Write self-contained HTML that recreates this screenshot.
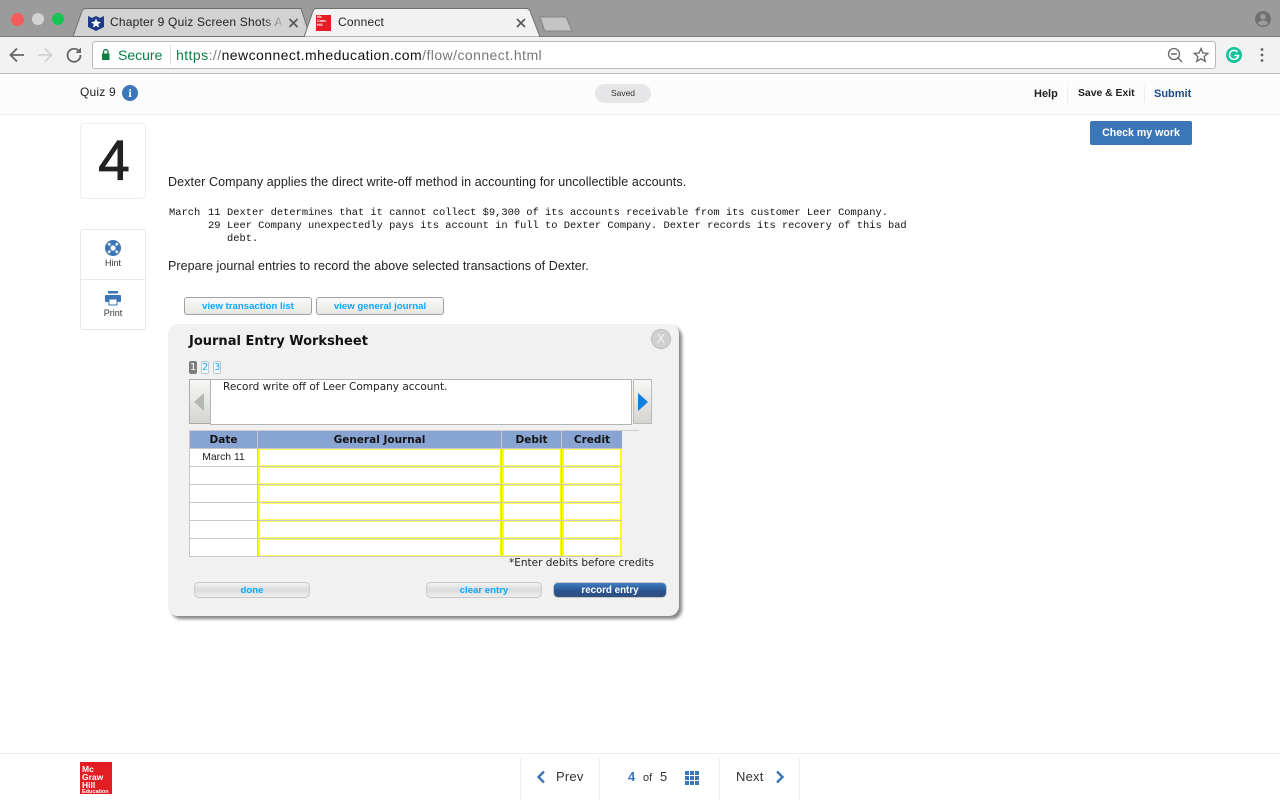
<!DOCTYPE html>
<html lang="en"><head><meta charset="utf-8"><title>Connect</title>
<style>
html,body{margin:0;padding:0;width:1280px;height:800px;overflow:hidden;background:#fff;font-family:"Liberation Sans",sans-serif;color:#222}
.a{position:absolute;white-space:nowrap}
.box{position:absolute;box-sizing:border-box}
.c{position:absolute;box-sizing:border-box;background:#fff;border:1px solid #ffff60;border-left:2px solid #ffff00;border-right:1px solid #ffff00;height:17px}
.d{position:absolute;box-sizing:border-box;background:#fff;left:190px;width:67px;height:17px}
.h{position:absolute;top:431px;height:17px;background:#88a4d2;font:bold 10.500px/18px "DejaVu Sans",sans-serif;color:#111;text-align:center}
.btn{position:absolute;box-sizing:border-box;border:1px solid #a0a0a0;border-radius:3px;background:linear-gradient(#fafafa,#e6e6e2);font:bold 9.600px/17px "Liberation Sans",sans-serif;color:#0ea8ff;text-align:center}
.btn2{position:absolute;box-sizing:border-box;border:1px solid #c8c8c8;border-radius:5px;background:linear-gradient(#f4f4f4,#dadada 50%,#f0f0f0);font:bold 9.600px/15px "Liberation Sans",sans-serif;color:#0ea8ff;text-align:center;height:16px}
.pg{position:absolute;box-sizing:border-box;top:361px;width:8px;height:13px;border:1px solid #b5c7d3;border-radius:2px;background:#fff;color:#0ea8ff;font:10px/11px "DejaVu Sans",sans-serif;text-align:center;overflow:hidden}
.sep{position:absolute;width:1px;background:#eee}
.m{position:absolute;white-space:pre;font:10.400px/13px 'Liberation Mono',monospace;color:#111}
</style></head><body>

<!-- tab strip -->
<div class="box" style="left:0;top:0;width:1280px;height:37px;background:#9b9b9b;border-bottom:1px solid #777"></div>
<div class="box" style="left:11px;top:13px;width:13px;height:13px;border-radius:50%;background:#f25c5c"></div>
<div class="box" style="left:32px;top:13px;width:12px;height:12px;border-radius:50%;background:#d2d2d2"></div>
<div class="box" style="left:52px;top:13px;width:12px;height:12px;border-radius:50%;background:#16c653"></div>
<svg class="a" style="left:0;top:0" width="600" height="38">
<path d="M73 36.500 L82 11 Q83 8.500 86 8.500 H301 L310 36.500 Z" fill="#d2d2d2" stroke="#6f6f6f"/>
<path d="M304 37 L313 11 Q314 8.500 317 8.500 H526 Q529 8.500 530 11 L540 37 Z" fill="#f2f2f2" stroke="#6f6f6f"/>
<path d="M540 17 H564 Q566 17 567 19 L572 31 H546 Q544 31 544 29 Z" fill="#c4c4c4" stroke="#858585"/>
<path d="M88 16 L92 18 L96 16 L100 18 L104 16 V27 L96 31 L88 27 Z" fill="#1f3a86"/>
<path d="M96 18.500 L97.400 21.600 L100.800 22 L98.300 24.200 L99 27.500 L96 25.800 L93 27.500 L93.700 24.200 L91.200 22 L94.600 21.600 Z" fill="#fff"/>
<path d="M289.500 19 L297.500 27 M297.500 19 L289.500 27" stroke="#555" stroke-width="1.600"/>
<path d="M517 19 L525 27 M525 19 L517 27" stroke="#555" stroke-width="1.600"/>
</svg>
<div class="a" style="left:110px;top:15px;width:175px;overflow:hidden;font-size:12px;line-height:15px;letter-spacing:.2px;color:#222">Chapter 9 Quiz Screen Shots A</div>
<div class="box" style="left:262px;top:12px;width:24px;height:20px;background:linear-gradient(90deg,rgba(210,210,210,0),#d2d2d2)"></div>
<div class="box" style="left:316px;top:15px;width:15px;height:16px;background:#e21d24;color:#fff;font:bold 3.500px/3.800px 'Liberation Sans',sans-serif;padding:1px 0 0 1px">Mc<br>Graw<br>Hill</div>
<div class="a" style="left:338px;top:15px;font-size:12px;line-height:15px;letter-spacing:.2px;color:#222">Connect</div>
<svg class="a" style="left:1254px;top:10px" width="18" height="18"><circle cx="9" cy="9" r="8" fill="#707070"/><circle cx="9" cy="6.800" r="2.800" fill="#9b9b9b"/><path d="M3.800 13.500 Q5 10.500 9 10.500 Q13 10.500 14.200 13.500 Q12 15.500 9 15.500 Q6 15.500 3.800 13.500 Z" fill="#9b9b9b"/></svg>

<!-- toolbar -->
<div class="box" style="left:0;top:37px;width:1280px;height:37px;background:#f2f2f2;border-bottom:1px solid #bcbcbc"></div>
<svg class="a" style="left:0;top:37px" width="95" height="37">
<path d="M24 18 H11 M17 11.500 L10.500 18 L17 24.500" fill="none" stroke="#666" stroke-width="1.800"/>
<path d="M38 18 H51 M45 11.500 L51.500 18 L45 24.500" fill="none" stroke="#d2d2d2" stroke-width="1.800"/>
<path d="M79.300 14.500 A6.500 6.500 0 1 0 80.500 18" fill="none" stroke="#666" stroke-width="1.800"/>
<path d="M81 10.500 V16 H75.500 Z" fill="#666"/>
</svg>
<div class="box" style="left:92px;top:41px;width:1124px;height:28px;background:#fff;border:1px solid #b8b8b8;border-radius:3px"></div>
<svg class="a" style="left:100px;top:48px" width="12" height="15"><rect x="2" y="5.500" width="7.500" height="6.500" fill="#0b8043"/><path d="M3.500 5.500 V3.800 A2.200 2.200 0 0 1 8 3.800 V5.500" fill="none" stroke="#0b8043" stroke-width="1.300"/></svg>
<div class="a" style="left:118px;top:46px;font-size:14px;line-height:18px;color:#0b8043">Secure</div>
<div class="box" style="left:170px;top:45px;width:1px;height:20px;background:#ddd"></div>
<div class="a" style="left:176px;top:46px;font-size:14px;line-height:18px;letter-spacing:.44px;color:#777"><span style="color:#0b8043">https</span>://<span style="color:#111">newconnect.mheducation.com</span>/flow/connect.html</div>
<svg class="a" style="left:1165px;top:44px" width="105" height="24">
<circle cx="9" cy="10" r="5.500" fill="none" stroke="#666" stroke-width="1.300"/><path d="M6 10 H12 M13 14 L17 18" stroke="#666" stroke-width="1.400" fill="none"/>
<path d="M36 4.500 L37.900 9 L42.800 9.400 L39.100 12.600 L40.200 17.400 L36 14.800 L31.800 17.400 L32.900 12.600 L29.200 9.400 L34.100 9 Z" fill="none" stroke="#666" stroke-width="1.300"/>
<circle cx="69" cy="11" r="8" fill="#15c39a"/><path d="M72.500 8 A4.500 4.500 0 1 0 73.500 11.500 H69.500" fill="none" stroke="#fff" stroke-width="1.500"/>
<circle cx="97" cy="5.500" r="1.400" fill="#666"/><circle cx="97" cy="11" r="1.400" fill="#666"/><circle cx="97" cy="16.500" r="1.400" fill="#666"/>
</svg>

<!-- quiz header -->
<div class="box" style="left:0;top:74px;width:1280px;height:41px;background:#fcfcfc;border-bottom:1px solid #eee"></div>
<div class="a" style="left:80px;top:85px;font-size:12px;line-height:15px;letter-spacing:.2px;color:#222">Quiz 9</div>
<div class="box" style="left:122px;top:85px;width:16px;height:16px;border-radius:50%;background:#3b76b8;color:#fff;font:bold 12px/16px 'Liberation Serif',serif;text-align:center">i</div>
<div class="box" style="left:595px;top:84px;width:56px;height:19px;border-radius:10px;background:#e6e6e8;color:#333;font-size:8.500px;line-height:18px;text-align:center">Saved</div>
<div class="a" style="left:1034px;top:86px;font-size:11px;line-height:16px;font-weight:bold;color:#222">Help</div>
<div class="sep" style="left:1067px;top:86px;height:16px"></div>
<div class="a" style="left:1078px;top:86px;font-size:10.400px;line-height:16px;font-weight:bold;color:#222">Save &amp; Exit</div>
<div class="sep" style="left:1144px;top:86px;height:16px"></div>
<div class="a" style="left:1154px;top:86px;font-size:11px;line-height:16px;font-weight:bold;color:#1b4a84">Submit</div>
<div class="box" style="left:1090px;top:121px;width:102px;height:24px;border-radius:2px;background:#3b76b8;color:#fff;font-size:10.600px;line-height:24px;font-weight:bold;text-align:center">Check my work</div>

<!-- sidebar -->
<div class="box" style="left:80px;top:123px;width:66px;height:76px;border:1px solid #eee;border-radius:4px;background:#fff;color:#222;font-size:57px;line-height:75px;text-align:center;padding-left:2px;-webkit-text-stroke:.8px #222">4</div>
<div class="box" style="left:80px;top:229px;width:66px;height:101px;border:1px solid #e8e8e8;border-radius:3px;background:#fff"></div>
<div class="box" style="left:81px;top:279px;width:64px;height:1px;background:#e8e8e8"></div>
<svg class="a" style="left:104px;top:239px" width="18" height="18"><circle cx="9" cy="9" r="8" fill="#3b76b8"/><circle cx="9" cy="9" r="2.600" fill="#fff"/><path d="M4.300 4.300 L6.200 6.200 M13.700 4.300 L11.800 6.200 M4.300 13.700 L6.200 11.800 M13.700 13.700 L11.800 11.800" stroke="#fff" stroke-width="2.400"/></svg>
<div class="a" style="left:80px;top:257px;width:66px;text-align:center;font-size:9px;line-height:12px;color:#333">Hint</div>
<svg class="a" style="left:105px;top:291px" width="16" height="15"><rect x="3" y="0" width="10" height="2.500" fill="#3b76b8"/><rect x="0" y="4" width="16" height="7" rx="1" fill="#3b76b8"/><rect x="4" y="8" width="8" height="6" fill="#fff" stroke="#3b76b8"/></svg>
<div class="a" style="left:80px;top:307px;width:66px;text-align:center;font-size:9px;line-height:12px;color:#333">Print</div>

<!-- question -->
<div class="a" style="left:168px;top:174px;font-size:12.500px;line-height:16px;letter-spacing:.1px;color:#222">Dexter Company applies the direct write-off method in accounting for uncollectible accounts.</div>
<div class="m" style="left:169px;top:207px">March</div>
<div class="m" style="left:208px;top:207px">11</div>
<div class="m" style="left:227px;top:207px">Dexter determines that it cannot collect $9,300 of its accounts receivable from its customer Leer Company.</div>
<div class="m" style="left:208px;top:220px">29</div>
<div class="m" style="left:227px;top:220px">Leer Company unexpectedly pays its account in full to Dexter Company. Dexter records its recovery of this bad</div>
<div class="m" style="left:227px;top:233px">debt.</div>
<div class="a" style="left:168px;top:258px;font-size:12.500px;line-height:16px;letter-spacing:.07px;color:#222">Prepare journal entries to record the above selected transactions of Dexter.</div>
<div class="btn" style="left:184px;top:297px;width:128px;height:18px">view transaction list</div>
<div class="btn" style="left:316px;top:297px;width:128px;height:18px">view general journal</div>

<!-- worksheet -->
<div class="box" style="left:168px;top:324px;width:511px;height:292px;background:#f1f1f1;border-radius:10px;box-shadow:3px 3px 3px #858585"></div>
<div class="a" style="left:189px;top:334px;font:bold 13px/16px 'DejaVu Sans',sans-serif;color:#111">Journal Entry Worksheet</div>
<div class="box" style="left:651px;top:329px;width:20px;height:20px;border-radius:50%;background:#d0d0d0;border:1px solid #bbb;color:#f4f4f4;font:12px/18px 'DejaVu Sans',sans-serif;text-align:center">X</div>
<div class="pg" style="left:189px;background:#7d7d7d;border-color:#7d7d7d;color:#fff">1</div>
<div class="pg" style="left:201px">2</div>
<div class="pg" style="left:213px">3</div>

<div class="box" style="left:189px;top:379px;width:22px;height:45px;background:linear-gradient(#f7f7f5,#d4d4d0);border:1px solid #aaa"></div>
<svg class="a" style="left:194px;top:393px" width="10" height="18"><path d="M10 0 V18 L0 9 Z" fill="#b4b8b4"/></svg>
<div class="box" style="left:210px;top:379px;width:422px;height:46px;background:#fff;border:1px solid #b5b5b5"></div>
<div class="a" style="left:223px;top:380px;font:10.500px/14px 'DejaVu Sans',sans-serif;color:#222">Record write off of Leer Company account.</div>
<div class="box" style="left:633px;top:379px;width:19px;height:45px;background:linear-gradient(#f7f7f5,#d4d4d0);border:1px solid #bbb"></div>
<svg class="a" style="left:638px;top:393px" width="10" height="18"><path d="M0 0 V18 L10 9 Z" fill="#0f7fe0"/></svg>

<!-- table -->
<div class="box" style="left:189px;top:430px;width:450px;height:1px;background:#ccc"></div>
<div class="box" style="left:189px;top:431px;width:433px;height:126px;background:#c8c8c8"></div>
<div class="h" style="left:190px;width:67px">Date</div>
<div class="h" style="left:258px;width:243px">General Journal</div>
<div class="h" style="left:502px;width:59px">Debit</div>
<div class="h" style="left:562px;width:60px">Credit</div>

<div class="d" style="top:449px;font-size:10.400px;line-height:18px;text-align:center;color:#222">March 11</div>
<div class="d" style="top:467px"></div>
<div class="d" style="top:485px"></div>
<div class="d" style="top:503px"></div>
<div class="d" style="top:521px"></div>
<div class="d" style="top:539px"></div>

<div class="c" style="left:258px;top:449px;width:243px"></div><div class="c" style="left:502px;top:449px;width:59px"></div><div class="c" style="left:562px;top:449px;width:60px;border-right-width:2px"></div>
<div class="c" style="left:258px;top:467px;width:243px"></div><div class="c" style="left:502px;top:467px;width:59px"></div><div class="c" style="left:562px;top:467px;width:60px;border-right-width:2px"></div>
<div class="c" style="left:258px;top:485px;width:243px"></div><div class="c" style="left:502px;top:485px;width:59px"></div><div class="c" style="left:562px;top:485px;width:60px;border-right-width:2px"></div>
<div class="c" style="left:258px;top:503px;width:243px"></div><div class="c" style="left:502px;top:503px;width:59px"></div><div class="c" style="left:562px;top:503px;width:60px;border-right-width:2px"></div>
<div class="c" style="left:258px;top:521px;width:243px"></div><div class="c" style="left:502px;top:521px;width:59px"></div><div class="c" style="left:562px;top:521px;width:60px;border-right-width:2px"></div>
<div class="c" style="left:258px;top:539px;width:243px"></div><div class="c" style="left:502px;top:539px;width:59px"></div><div class="c" style="left:562px;top:539px;width:60px;border-right-width:2px"></div>

<div class="a" style="left:454px;width:200px;top:556px;text-align:right;font:10.500px/14px 'DejaVu Sans',sans-serif;color:#222">*Enter debits before credits</div>
<div class="btn2" style="left:194px;top:582px;width:116px">done</div>
<div class="btn2" style="left:426px;top:582px;width:116px">clear entry</div>
<div class="btn2" style="left:553px;top:582px;width:114px;background:linear-gradient(#3f7fc4,#2a5590 55%,#2f4f7e);border-color:#c8c8c8;color:#fff;font-size:9.800px">record entry</div>

<!-- footer -->
<div class="box" style="left:0;top:753px;width:1280px;height:1px;background:#eee"></div>
<div class="box" style="left:80px;top:762px;width:32px;height:32px;background:#e21d24;color:#fff;font:bold 8.500px/8px 'Liberation Sans',sans-serif;padding:3px 0 0 2px;overflow:hidden">Mc<br>Graw<br>Hill<br><span style="font-size:5.500px;line-height:6px;display:block">Education</span></div>
<div class="sep" style="left:520px;top:758px;height:42px"></div>
<div class="sep" style="left:599px;top:758px;height:42px"></div>
<div class="sep" style="left:719px;top:758px;height:42px"></div>
<div class="sep" style="left:799px;top:758px;height:42px"></div>
<svg class="a" style="left:535px;top:770px" width="12" height="14"><path d="M9 1.500 L3.500 7 L9 12.500" fill="none" stroke="#3b76b8" stroke-width="2.400"/></svg>
<div class="a" style="left:556px;top:769px;font-size:13px;line-height:16px;letter-spacing:.2px;color:#333">Prev</div>
<div class="a" style="left:628px;top:769px;font-size:13px;line-height:16px;font-weight:bold;color:#3b76b8">4</div>
<div class="a" style="left:643px;top:770px;font-size:11px;line-height:16px;color:#333">of</div>
<div class="a" style="left:660px;top:769px;font-size:13px;line-height:16px;color:#333">5</div>
<svg class="a" style="left:685px;top:771px" width="14" height="15" fill="#3b76b8"><rect x="0" y="0" width="4" height="4"/><rect x="5" y="0" width="4" height="4"/><rect x="10" y="0" width="4" height="4"/><rect x="0" y="5" width="4" height="4"/><rect x="5" y="5" width="4" height="4"/><rect x="10" y="5" width="4" height="4"/><rect x="0" y="10" width="4" height="4"/><rect x="5" y="10" width="4" height="4"/><rect x="10" y="10" width="4" height="4"/></svg>
<div class="a" style="left:736px;top:769px;font-size:13px;line-height:16px;letter-spacing:.2px;color:#333">Next</div>
<svg class="a" style="left:774px;top:770px" width="12" height="14"><path d="M3 1.500 L8.500 7 L3 12.500" fill="none" stroke="#3b76b8" stroke-width="2.400"/></svg>

</body></html>
